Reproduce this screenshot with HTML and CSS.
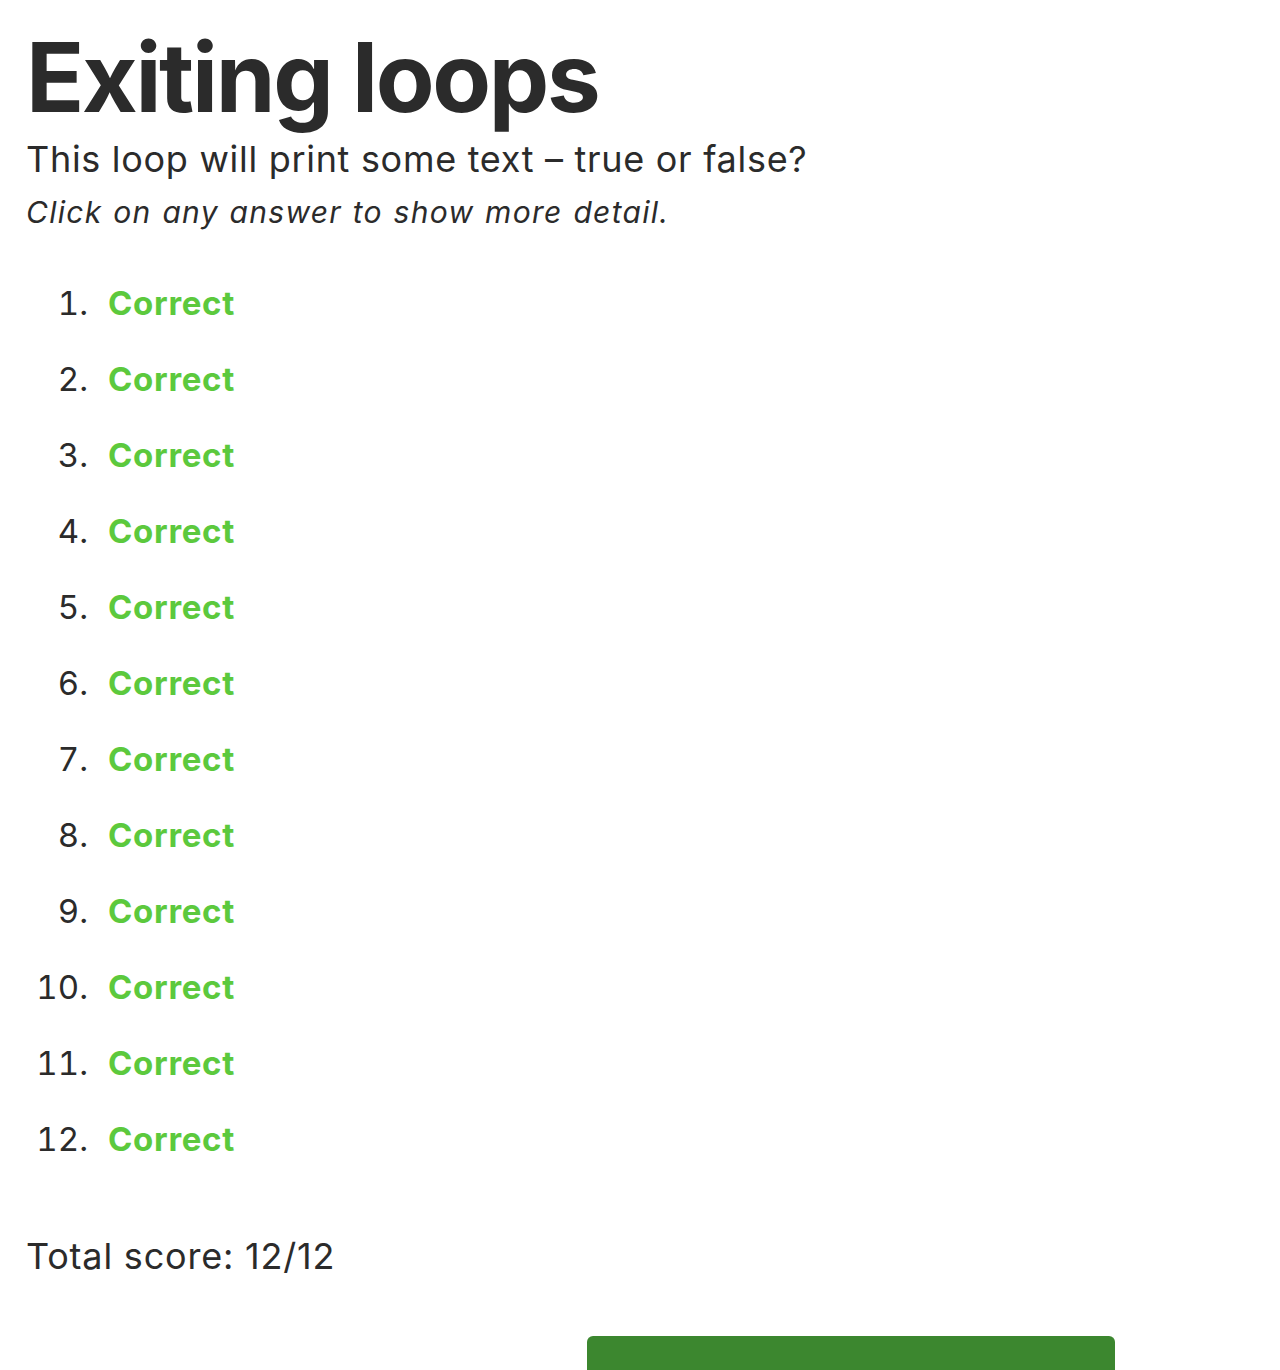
FILE: index.html
```html
<!DOCTYPE html>
<html lang="en">
<head>
<meta charset="utf-8">
<title>Exiting loops</title>
<link rel="stylesheet" href="styles.css">
</head>
<body>
<main class="page">
  <h1 class="title">Exiting loops</h1>
  <p class="question">This loop will print some text – true or false?</p>
  <p class="hint">Click on any answer to show more detail.</p>
  <ol class="answers">
    <li class="answer"><span class="correct">Correct</span></li>
    <li class="answer"><span class="correct">Correct</span></li>
    <li class="answer"><span class="correct">Correct</span></li>
    <li class="answer"><span class="correct">Correct</span></li>
    <li class="answer"><span class="correct">Correct</span></li>
    <li class="answer"><span class="correct">Correct</span></li>
    <li class="answer"><span class="correct">Correct</span></li>
    <li class="answer"><span class="correct">Correct</span></li>
    <li class="answer"><span class="correct">Correct</span></li>
    <li class="answer"><span class="correct">Correct</span></li>
    <li class="answer"><span class="correct">Correct</span></li>
    <li class="answer"><span class="correct">Correct</span></li>
  </ol>
  <p class="score">Total score: 12/12</p>
  <div class="actions">
    <button class="continue" type="button"></button>
  </div>
</main>
</body>
</html>
```

FILE: styles.css
```css
html, body {
  margin: 0;
  padding: 0;
  background: #ffffff;
}

body {
  font-family: Inter, "Noto Sans", sans-serif;
  color: #2b2b2b;
}

.page {
  padding: 25px 0 0 26px;
}

.title {
  margin: 0;
  font-size: 96px;
  line-height: 104px;
  font-weight: 700;
  letter-spacing: -2.3px;
}

.question {
  margin: 8px 0 0;
  font-size: 36px;
  line-height: 44px;
  font-weight: 400;
  letter-spacing: 0.7px;
}

.hint {
  margin: 12px 0 0;
  font-size: 30px;
  line-height: 38px;
  font-style: italic;
  letter-spacing: 1.3px;
  word-spacing: 1px;
}

.answers {
  list-style: none;
  margin: 34px 0 0;
  padding: 0;
  counter-reset: item;
}

.answer {
  counter-increment: item;
  display: flex;
  align-items: baseline;
  height: 76px;
  font-size: 33px;
  line-height: 76px;
}

.answer::before {
  content: counter(item) ".";
  width: 62px;
  text-align: right;
  margin-right: 20px;
  font-weight: 400;
  color: #2b2b2b;
  font-variant-numeric: tabular-nums;
  font-feature-settings: "tnum" 1;
}

.correct {
  color: #5cc93d;
  font-weight: 700;
  letter-spacing: 0.7px;
}

.score {
  margin: 57px 0 0;
  font-size: 36px;
  line-height: 44px;
  letter-spacing: 0.8px;
}

.actions {
  display: flex;
  margin-top: 58px;
  padding-left: 561px;
}

.continue {
  width: 528px;
  height: 64px;
  border: none;
  border-radius: 6px;
  background: #3c872f;
  padding: 0;
}
```
